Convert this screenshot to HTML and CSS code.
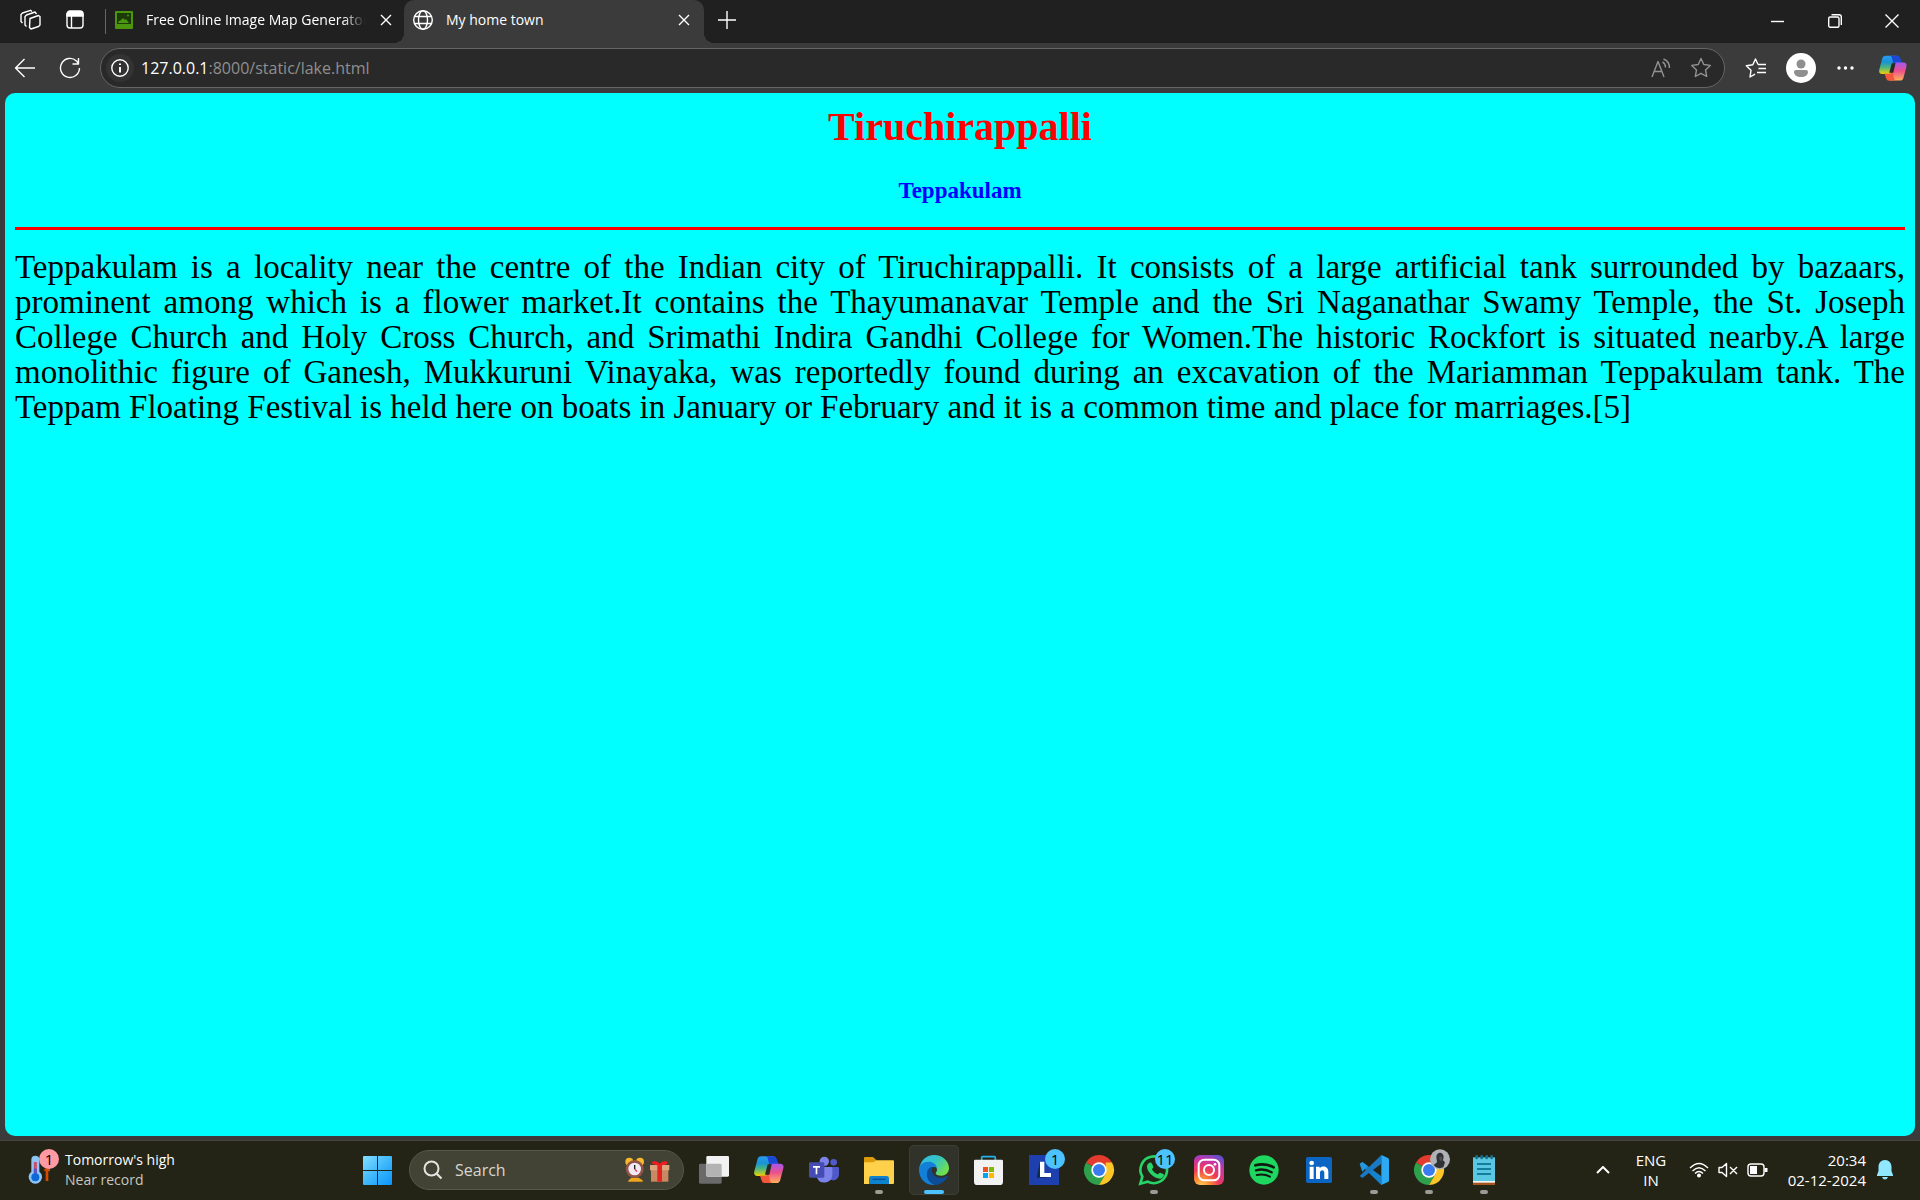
FILE: index.html
```html
<!DOCTYPE html>
<html lang="en">
<head>
<meta charset="utf-8">
<title>My home town</title>
<link rel="stylesheet" href="styles.css">
</head>
<body>
<svg class="defs" width="0" height="0" aria-hidden="true">
  <defs>
    <linearGradient id="copA" x1="0" y1="0" x2="0" y2="1"><stop offset="0" stop-color="#2a9cf0"/><stop offset=".35" stop-color="#1793d6"/><stop offset=".65" stop-color="#52b77a"/><stop offset="1" stop-color="#f2d200"/></linearGradient>
    <linearGradient id="copB" x1="0" y1="0" x2="0" y2="1"><stop offset="0" stop-color="#a259f0"/><stop offset=".45" stop-color="#ec4f8d"/><stop offset="1" stop-color="#ffb35a"/></linearGradient>
    <linearGradient id="win" gradientUnits="userSpaceOnUse" x1="0" y1="0" x2="29" y2="29"><stop offset="0" stop-color="#84e0ff"/><stop offset=".5" stop-color="#3fb8fb"/><stop offset="1" stop-color="#0a94fb"/></linearGradient>
    <symbol id="copilot" viewBox="222 62 90 83">
      <path d="M244 64h34c6 0 9 4 11 9l5 14h-15c-6 0-9 3-11 9l-8 27H232c-8 0-11-6-9-14l9-35c2-7 6-10 12-10z" fill="url(#copA)"/>
      <path d="M262 64h18c6 0 9 4 11 10l4 13h-15c-6 0-9 3-11 8l-4-18c-1-7-2-11-8-13z" fill="#1b48d4"/>
      <path d="M290 144h-33c-6 0-9-4-11-9l-4-13h14c6 0 9-3 11-9l8-27h26c8 0 11 6 9 14l-9 34c-2 7-5 10-11 10z" fill="url(#copB)"/>
      <path d="M272 144h-18c-6 0-8-4-10-10l-4-12h15c6 0 9-2 11-8l3 17c1 6 2 11 8 13z" fill="#f5573c"/>
      <path d="M263 88h12l-7 31h-13z" fill="#2a2a22"/>
    </symbol>
  </defs>
</svg>

<header class="titlebar">
  <button class="tool" aria-label="Workspaces"><svg width="22" height="22" viewBox="0 0 22 22" class="line"><path d="M11 9.500l8.500-3 1.500 1v8.500l-1.500 1.500-7.500 2.500-1.500-1.500z"/><path d="M7.500 17.500L6 16V7.500L7.500 6l8.500-3 1.500 2M3.500 14L2 12.500V5.500L3.500 4l8-2.700L13 2.500"/></svg></button>
  <button class="tool" aria-label="Tab actions"><svg width="20" height="20" viewBox="0 0 20 20" class="line"><rect x="2" y="2" width="16" height="16" rx="3"/><path d="M2 6V4a3 3 0 0 1 3-3h10a3 3 0 0 1 3 3v2z" fill="#fff"/><path d="M6.500 6v12"/></svg></button>
  <div class="tab">
    <svg width="18" height="18" viewBox="0 0 18 18"><rect width="18" height="18" rx="1" fill="#4b960c"/><rect x="2" y="2" width="14" height="11" fill="#1c3a08"/><path d="M3 12l1-2 2-1 2-2 2 2 1-1 3 4z" fill="#4b960c"/><circle cx="13" cy="4.500" r="1" fill="#4b960c"/></svg>
    <span class="tab-title fade">Free Online Image Map Generator</span>
    <button class="close" aria-label="Close tab"><svg width="12" height="12" viewBox="0 0 12 12" class="line"><path d="M1 1l10 10M11 1L1 11"/></svg></button>
  </div>
  <div class="tab active">
    <svg width="20" height="20" viewBox="0 0 20 20" class="line"><circle cx="10" cy="10" r="9.300"/><ellipse cx="10" cy="10" rx="4.500" ry="9.300"/><path d="M1.500 6.500h17M1.500 13.500h17"/></svg>
    <span class="tab-title">My home town</span>
    <button class="close" aria-label="Close tab"><svg width="12" height="12" viewBox="0 0 12 12" class="line"><path d="M1 1l10 10M11 1L1 11"/></svg></button>
  </div>
  <button class="tool" aria-label="New tab"><svg width="18" height="18" viewBox="0 0 18 18" class="line"><path d="M9 0v18M0 9h18"/></svg></button>
  <div class="window-controls">
    <button aria-label="Minimize"><svg width="14" height="14" viewBox="0 0 14 14" class="line"><path d="M0 7.500h13"/></svg></button>
    <button aria-label="Restore"><svg width="14" height="14" viewBox="0 0 14 14" class="line"><rect x=".7" y="3" width="10.300" height="10.300" rx="1.500"/><path d="M3.500 .7H11a2.300 2.300 0 0 1 2.300 2.300v8"/></svg></button>
    <button aria-label="Close"><svg width="14" height="14" viewBox="0 0 14 14" class="line"><path d="M.5 .5l13 13M13.500 .5l-13 13"/></svg></button>
  </div>
</header>

<nav class="toolbar">
  <button class="tool" aria-label="Back"><svg width="22" height="20" viewBox="0 0 22 20" class="line"><path d="M21 10H1.500M10.500 1L1.500 10l9 9"/></svg></button>
  <button class="tool" aria-label="Refresh"><svg width="22" height="22" viewBox="0 0 22 22" class="line"><path d="M20.500 11A9.500 9.500 0 1 1 17.500 4L19.500 6.500M19.500 1v6H13.500"/></svg></button>
  <div class="address">
    <button class="site-info" aria-label="Site information"><svg width="18" height="18" viewBox="0 0 18 18" class="line"><circle cx="9" cy="9" r="8.200"/><path d="M9 8v5.500M9 4.500v1.500" stroke-width="2"/></svg></button>
    <a class="url" href="#"><span class="host">127.0.0.1</span>:8000/static/lake.html</a>
    <button class="tool dim" aria-label="Read aloud"><svg width="20" height="20" viewBox="0 0 20 20" class="line"><path d="M1 19L7 3.500 13 19M3.500 13.500h7.500M11.500 4c2 1 3 2.800 3 5.500M12.500 1c4 1.500 6 4.500 6 9"/></svg></button>
    <button class="tool dim" aria-label="Favorite"><svg width="22" height="22" viewBox="0 0 22 22" class="line"><path d="M11 1.500l2.800 6 6.500.900-4.800 4.500 1.200 6.600L11 16.300l-5.700 3.200 1.200-6.600L1.700 8.400l6.500-.9z"/></svg></button>
  </div>
  <button class="tool" aria-label="Favorites"><svg width="22" height="20" viewBox="0 0 22 20" class="line"><path d="M13 6.500L10.500 1 7.800 6.800 1.300 7.700 6 12.300 5 19l5-2.900M13 6.500h8M13.500 10.500h7.500M12 14.500h9"/></svg></button>
  <button class="profile" aria-label="Profile"><svg width="30" height="30" viewBox="0 0 30 30"><circle cx="15" cy="15" r="15" fill="#fff"/><circle cx="15" cy="11" r="4.500" fill="#8f8f8f"/><path d="M10 17h10a2 2 0 0 1 2 2c0 3-3 5-7 5s-7-2-7-5a2 2 0 0 1 2-2z" fill="#8f8f8f"/></svg></button>
  <button class="tool" aria-label="Settings and more"><svg width="18" height="4" viewBox="0 0 18 4"><g fill="#fff"><circle cx="2" cy="2" r="1.700"/><circle cx="8.500" cy="2" r="1.700"/><circle cx="15" cy="2" r="1.700"/></g></svg></button>
  <button class="tool copilot" aria-label="Copilot"><svg width="28" height="26"><use href="#copilot"/></svg></button>
</nav>

<main class="page">
  <h1>Tiruchirappalli</h1>
  <h3>Teppakulam</h3>
  <hr>
  <p>Teppakulam is a locality near the centre of the Indian city of Tiruchirappalli. It consists of a large artificial tank surrounded by bazaars, prominent among which is a flower market.It contains the Thayumanavar Temple and the Sri Naganathar Swamy Temple, the St. Joseph College Church and Holy Cross Church, and Srimathi Indira Gandhi College for Women.The historic Rockfort is situated nearby.A large monolithic figure of Ganesh, Mukkuruni Vinayaka, was reportedly found during an excavation of the Mariamman Teppakulam tank. The Teppam Floating Festival is held here on boats in January or February and it is a common time and place for marriages.[5]</p>
</main>

<footer class="taskbar">
  <button class="weather">
    <span class="weather-icon"><svg width="32" height="38" viewBox="85 80 96 114"><path d="M142 140v39" stroke="#d44a05" stroke-width="8"/><path d="M134 146h17" stroke="#d44a05" stroke-width="7"/><path d="M95 115a12 12 0 0 1 24 0v36a20 20 0 1 1-24 0z" fill="#8cc5f5"/><path d="M107 122v32" stroke="#d34a6c" stroke-width="9"/><path d="M107 142v20" stroke="#5a52c4" stroke-width="9"/><circle cx="107" cy="168" r="12" fill="#0f67d8"/></svg><span class="badge pink">1</span></span>
    <span class="lines"><span>Tomorrow's high</span><span class="soft">Near record</span></span>
  </button>
  <div class="apps">
    <button class="app" aria-label="Start"><svg width="29" height="29" viewBox="0 0 29 29"><path d="M0 1a1 1 0 0 1 1-1h13v14H0zM15 0h13a1 1 0 0 1 1 1v13H15zM0 15h14v14H1a1 1 0 0 1-1-1zM15 15h14v13a1 1 0 0 1-1 1H15z" fill="url(#win)"/></svg></button>
    <label class="search">
      <svg width="20" height="20" viewBox="0 0 20 20"><circle cx="8.500" cy="8.500" r="7" fill="none" stroke="#e4e4de" stroke-width="2"/><path d="M13.500 13.500l5 5" stroke="#e4e4de" stroke-width="2.200"/></svg>
      <input type="text" placeholder="Search" aria-label="Search">
      <svg width="46" height="26" viewBox="852 70 138 78"><path d="M866 140l8-8h22l12 8v4h-44z" fill="#efa51c"/><circle cx="868" cy="84" r="12" fill="#f8b92d"/><circle cx="900" cy="84" r="12" fill="#f8b92d"/><circle cx="884" cy="106" r="27" fill="#915548"/><circle cx="884" cy="106" r="19" fill="#f1e9f4"/><path d="M884 94v12" stroke="#222" stroke-width="4"/><path d="M884 106l7 8" stroke="#e8375b" stroke-width="4"/><path d="M933 104h52v40h-52z" fill="#c98a63"/><path d="M930 94h58v16h-58z" fill="#dda57d"/><path d="M952 94h14v50h-14z" fill="#e42222"/><path d="M959 96c-8-2-24-2-23-9s19-5 23 5c4-10 22-12 23-5s-15 7-23 9z" fill="#f01c22"/></svg>
    </label>
    <button class="app" aria-label="Task view"><svg viewBox="27 30 150 150"><rect x="57" y="86" width="68" height="60" rx="4" fill="#6a6a6a"/><rect x="79" y="63" width="68" height="62" rx="4" fill="#f2f2f2"/><path d="M79 86h42a4 4 0 0 1 4 4v35H83a4 4 0 0 1-4-4z" fill="#b3b3b3"/></svg></button>
    <button class="app" aria-label="Copilot"><svg viewBox="192 30 150 150"><use href="#copilot" x="222" y="62" width="90" height="83"/></svg></button>
    <button class="app" aria-label="Teams"><svg viewBox="357 30 150 150"><circle cx="461" cy="82" r="10" fill="#5059c9"/><path d="M448 96h25a4 4 0 0 1 4 4v18a18 18 0 0 1-29 14z" fill="#5059c9"/><circle cx="433" cy="79" r="14" fill="#7b83eb"/><path d="M411 96h42a4 4 0 0 1 4 4v20a24 24 0 0 1-46 8z" fill="#7b83eb"/><rect x="387" y="82" width="46" height="46" rx="4" fill="#454db5"/><path d="M399 93h21v5h-8v20h-5V98h-8z" fill="#fff"/></svg></button>
    <button class="app" aria-label="File Explorer"><svg viewBox="522 30 150 150"><path d="M552 69a3 3 0 0 1 3-3h24l11 10v14h-38z" fill="#dd9b0b"/><path d="M552 82h28l10-6h49a3 3 0 0 1 3 3v65a3 3 0 0 1-3 3h-87z" fill="#ffd04a"/><path d="M567 147v-17q0-7 7-7h46q7 0 7 7v17z" fill="#0d82cf"/><path d="M578 133h38" stroke="#0a4d91" stroke-width="4"/></svg><span class="dot"></span></button>
    <button class="app current" aria-label="Edge"><svg viewBox="687 30 150 150">
      <defs><linearGradient id="edG" x1="0" y1="0" x2="1" y2=".6"><stop offset="0" stop-color="#30b9ee"/><stop offset=".55" stop-color="#35c5c0"/><stop offset="1" stop-color="#72e04d"/></linearGradient></defs>
      <path d="M718 101c3-24 21-41 44-41 26 0 45 19 45 39 0 15-11 23-23 23-10 0-17-3-17-7 0-3 4-5 4-11 0-10-11-18-25-18-12 0-22 5-28 15z" fill="url(#edG)"/>
      <path d="M717 105c0-15 13-25 29-25 13 0 23 8 25 19-7-6-20-3-25 5-8 14-2 36 19 45-26 5-48-18-48-44z" fill="#147fd6"/>
      <path d="M744 104c3-6 9-9 15-9-7 9-3 26 13 32 11 4 20 1 28-4 3-1 4 1 2 4-9 14-22 23-36 23-21-5-31-29-22-46z" fill="#0d4d98"/></svg><span class="dot wide"></span></button>
    <button class="app" aria-label="Microsoft Store"><svg viewBox="12 30 150 150"><path d="M65 80V68q0-3 3-3h35q3 0 3 3v12" fill="none" stroke="#27b0ec" stroke-width="5"/><path d="M42 78q0-4 4-4h79q4 0 4 4v62q0 10-10 10H52q-10 0-10-10z" fill="#f2f2f2"/><path d="M69 96h15v15H69z" fill="#f25022"/><path d="M87 96h15v15H87z" fill="#7fba00"/><path d="M69 114h15v15H69z" fill="#00a4ef"/><path d="M87 114h15v15H87z" fill="#ffb900"/></svg></button>
    <button class="app" aria-label="L app"><svg viewBox="177 30 150 150"><path d="M207 60h90v90h-90z" fill="#1e3fae"/><path d="M240 80l-10 48h30v-8h-20z" fill="#10294f"/><path d="M240 80h13v34h20v12h-33z" fill="#fff"/></svg><span class="badge">1</span></button>
    <button class="app" aria-label="Chrome"><svg viewBox="342 30 150 150"><g id="chrome"><path d="M417 105L378 82.500A45 45 0 0 1 456 82.500z" fill="#e33b2e"/><path d="M378 82.500A45 45 0 0 0 417 150l20-34-20-11z" fill="#2da04b"/><path d="M456 82.500A45 45 0 0 1 417 150l20-34V82.500z" fill="#fcc629"/><circle cx="417" cy="105" r="23" fill="#fff"/><circle cx="417" cy="105" r="18" fill="#3a7cf0"/></g></svg></button>
    <button class="app" aria-label="WhatsApp"><svg viewBox="507 30 150 150"><path d="M541 146l6-21a40 40 0 1 1 16 15z" fill="none" stroke="#25d366" stroke-width="8"/><path d="M566 85c4-4 8-3 10 1l4 9c1 3-4 6-4 8 3 7 9 12 16 15 3 1 6-6 9-5l10 5c3 2-2 12-9 13-18 2-39-18-41-34-1-5 2-9 5-12z" fill="#25d366"/></svg><span class="badge">11</span><span class="dot"></span></button>
    <button class="app" aria-label="Instagram"><svg viewBox="672 30 150 150"><defs><radialGradient id="ig" cx=".25" cy="1.050" r="1.150"><stop offset="0" stop-color="#ffd35c"/><stop offset=".25" stop-color="#fb8a35"/><stop offset=".5" stop-color="#ee3b58"/><stop offset=".8" stop-color="#c534ab"/><stop offset="1" stop-color="#6250cf"/></radialGradient></defs><rect x="702" y="60" width="90" height="90" rx="18" fill="url(#ig)"/><g fill="none" stroke="#fff" stroke-width="6"><rect x="716" y="74" width="62" height="62" rx="17"/><circle cx="747" cy="105" r="15"/></g><circle cx="765" cy="88" r="4" fill="#fff"/></svg></button>
    <button class="app" aria-label="Spotify"><svg viewBox="-3 30 150 150"><circle cx="72" cy="105" r="44" fill="#1ed760"/><g fill="none" stroke="#10190f" stroke-linecap="round"><path d="M46 91q29-8 55 6" stroke-width="8"/><path d="M48 106q25-7 47 6" stroke-width="7"/><path d="M50 120q22-5 40 5" stroke-width="6"/></g></svg></button>
    <button class="app" aria-label="LinkedIn"><svg viewBox="162 30 150 150"><rect x="198" y="66" width="78" height="78" rx="5" fill="#0a66c2"/><circle cx="215" cy="84" r="7" fill="#fff"/><path d="M209 95h12v37h-12zM228 95h11v5c6-9 26-8 26 10v22h-12v-19c0-10-13-10-13 0v19h-12z" fill="#fff"/></svg></button>
    <button class="app" aria-label="Visual Studio Code"><svg viewBox="327 30 150 150"><path d="M359 87l8-6 57 43v26z" fill="#1582cc"/><path d="M359 123l8 6 57-43V60z" fill="#1a79c2"/><path d="M359 87l8-6 16 12-16 17z" fill="#2797dd"/><path d="M424 60l20 9q3 2 3 5v62q0 3-3 5l-20 9z" fill="#2caaf3"/></svg><span class="dot"></span></button>
    <button class="app" aria-label="Chrome profile"><svg viewBox="492 30 150 150"><use href="#chrome" x="150"/><circle cx="600" cy="73" r="30" fill="#aeb2b5"/><path d="M589 65q2-12 11-12t11 12l-2 11 6 6-5 15q-11 5-22 0l-7-7 10-8z" fill="#303236"/><path d="M597 65h10l-2 12h-5z" fill="#55504f"/></svg><span class="dot"></span></button>
    <button class="app" aria-label="Notepad"><svg viewBox="657 30 150 150"><path d="M699 130h66v20h-66z" fill="#a4541c"/><path d="M699 138h66v5h-66z" fill="#f3f3f3"/><path d="M699 67h66v71h-66z" fill="#5ac8e2"/><g stroke="#147c9c" stroke-width="6"><path d="M711 87h42M711 102h42M711 117h42"/></g><g stroke="#16708e" stroke-width="8" stroke-linecap="round"><path d="M710 64v5M725 64v5M740 64v5M755 64v5"/></g></svg><span class="dot"></span></button>
  </div>
  <div class="tray">
    <button class="chevron" aria-label="Hidden icons"><svg width="14" height="8" viewBox="0 0 14 8"><path d="M1 7l6-6 6 6" fill="none" stroke="#fff" stroke-width="2"/></svg></button>
    <button class="lines language"><span>ENG</span><span>IN</span></button>
    <button class="status" aria-label="Network, volume and battery">
      <svg width="20" height="16" viewBox="0 0 20 16" class="line"><path d="M1 6q9-9 18 0M3.500 9q6.500-6.500 13 0M6 11.500q4-4 8 0"/><circle cx="10" cy="13.500" r="1.300" fill="#fff"/></svg>
      <svg width="20" height="16" viewBox="0 0 20 16" class="line"><path d="M1 5.500h3L8.500 1.500v13L4 10.500H1zM12 5l7 7M19 5l-7 7"/></svg>
      <svg width="21" height="14" viewBox="0 0 21 14" class="line"><rect x="1" y="1" width="16" height="12" rx="3"/><path d="M19 5v4" stroke-width="3"/><path d="M3 3h7v8H3z" fill="#fff" stroke="none"/></svg>
    </button>
    <button class="lines clock"><span>20:34</span><span>02-12-2024</span></button>
    <button class="bell" aria-label="Notifications"><svg width="16" height="20" viewBox="0 0 16 20"><path d="M8 0c4 0 6.500 3 6.500 7v4l1.500 4v1H0v-1l1.500-4V7C1.500 3 4 0 8 0zM5 17h6q-1 2.500-3 2.500T5 17z" fill="#8fe8ff"/></svg></button>
  </div>
</footer>
</body>
</html>
```
FILE: styles.css
```css
* { box-sizing: border-box; }

body {
  margin: 0;
  min-height: 100vh;
  display: flex;
  flex-direction: column;
  background: #3b3b3b;
  color: #fff;
  font: 15px/20px "Open Sans", "Noto Sans", sans-serif;
}

button {
  border: 0;
  padding: 0;
  background: none;
  color: inherit;
  font: inherit;
  display: flex;
  align-items: center;
  justify-content: center;
  flex: none;
}

svg { display: block; flex: none; }
.defs { position: absolute; }
.line { fill: none; stroke: #fff; stroke-width: 1.4; stroke-linejoin: round; }

/* Title bar */
.titlebar {
  height: 43px;
  display: flex;
  background: #202020;
  padding-left: 7px;
}
.tool { width: 45px; height: 40px; }
.tab {
  position: relative;
  width: 300px;
  height: 43px;
  padding: 0 12px 3px 9px;
  display: flex;
  align-items: center;
  gap: 13px;
}
.tab:not(.active) { margin-left: 9px; }
.tab:not(.active)::before {
  content: "";
  position: absolute;
  left: -1px;
  top: 9px;
  width: 1px;
  height: 25px;
  background: #666;
}
.tab.active {
  margin-left: -2px;
  background: #3b3b3b;
  border-radius: 10px 10px 0 0;
}
.tab.active::before,
.tab.active::after {
  content: "";
  position: absolute;
  bottom: 0;
  width: 10px;
  height: 10px;
}
.tab.active::before { left: -10px; background: radial-gradient(circle at 0 0, #202020 10px, #3b3b3b 10px); }
.tab.active::after { right: -10px; background: radial-gradient(circle at 100% 0, #202020 10px, #3b3b3b 10px); }
.tab-title {
  flex: 1;
  min-width: 0;
  overflow: hidden;
  white-space: nowrap;
  font-size: 14px;
}
.fade { mask-image: linear-gradient(to right, #000 90%, transparent); }
.close { width: 16px; height: 16px; }
.window-controls { margin-left: auto; display: flex; }
.window-controls button { width: 57px; height: 42px; }

/* Toolbar */
.toolbar {
  height: 50px;
  display: flex;
  align-items: center;
  padding: 0 2px;
}
.address {
  flex: 1;
  height: 40px;
  margin: 0 8px;
  padding: 0 3px 0 5px;
  display: flex;
  align-items: center;
  border: 1px solid #666;
  border-radius: 20px;
  background: #292929;
}
.site-info { width: 28px; height: 28px; border-radius: 50%; background: #333; }
.url {
  flex: 1;
  margin-left: 7px;
  color: #8f8f8f;
  text-decoration: none;
  font-size: 16px;
}
.host { color: #fff; }
.address .tool { width: 40px; }
.dim .line { stroke: #929292; }
.profile { width: 45px; }
.toolbar .copilot { width: 50px; }

/* Web page */
.page {
  flex: 1;
  margin: 0 5px 4px;
  padding: 10px;
  border-radius: 10px;
  background: #00ffff;
  color: #000;
  font-family: "Liberation Serif", serif;
}
.page h1 {
  margin: 0;
  color: #ff0000;
  text-align: center;
  font-size: 40px;
  line-height: 48px;
}
.page h3 {
  margin: 26px 0 23px;
  color: #0000ff;
  text-align: center;
  font-size: 23px;
  line-height: 27px;
}
.page hr { margin: 0; border: 0; height: 3px; background: #ff0000; }
.page p {
  margin: 20px 0;
  text-align: justify;
  font-family: Georgia, "Liberation Serif", serif;
  font-size: 33px;
  line-height: 35px;
}

/* Taskbar */
.taskbar {
  height: 60px;
  display: flex;
  align-items: center;
  box-shadow: inset 0 1px #44443c;
  background: #232415;
}
.weather {
  width: 352px;
  padding-left: 28px;
  justify-content: flex-start;
  gap: 5px;
}
.weather-icon { position: relative; }
.weather-icon svg { margin-bottom: 6px; }
.lines { display: flex; flex-direction: column; text-align: left; font-size: 15px; }
.weather .lines { font-size: 14px; }
.soft { color: #c6c6c0; }
.badge {
  position: absolute;
  left: 26px;
  top: 4px;
  width: 20px;
  height: 20px;
  border-radius: 50%;
  background: #4cc2ff;
  color: #000;
  font-size: 15px;
  text-align: center;
}
.badge.pink { left: 11px; top: 1px; background: #ff99a4; }
.apps { display: flex; align-items: center; gap: 5px; }
.app { position: relative; width: 50px; height: 50px; border-radius: 5px; }
.app.current { background: #31322a; box-shadow: inset 0 0 0 1px #3c3d35; }
.dot {
  position: absolute;
  left: 21px;
  bottom: 1px;
  width: 8px;
  height: 4px;
  border-radius: 2px;
  background: #9b9b96;
}
.dot.wide { left: 15px; width: 20px; background: #4cc2ff; }
.search {
  width: 275px;
  height: 40px;
  margin-left: 2px;
  padding: 0 13px;
  display: flex;
  align-items: center;
  gap: 12px;
  border: 1px solid #57574a;
  border-radius: 20px;
  background: #424334;
}
.search input {
  flex: 1;
  min-width: 0;
  border: 0;
  padding: 0;
  background: none;
  color: #fff;
  font: 16px/20px "Open Sans", "Noto Sans", sans-serif;
}
.search input::placeholder { color: #d6d6d0; opacity: 1; }
.tray { margin-left: auto; display: flex; align-items: center; padding-right: 27px; }
.chevron { width: 36px; height: 50px; }
.language { width: 60px; align-items: center; }
.status { width: 94px; gap: 9px; }
.clock { width: 91px; align-items: flex-end; }
.bell { margin-left: 11px; }
```
